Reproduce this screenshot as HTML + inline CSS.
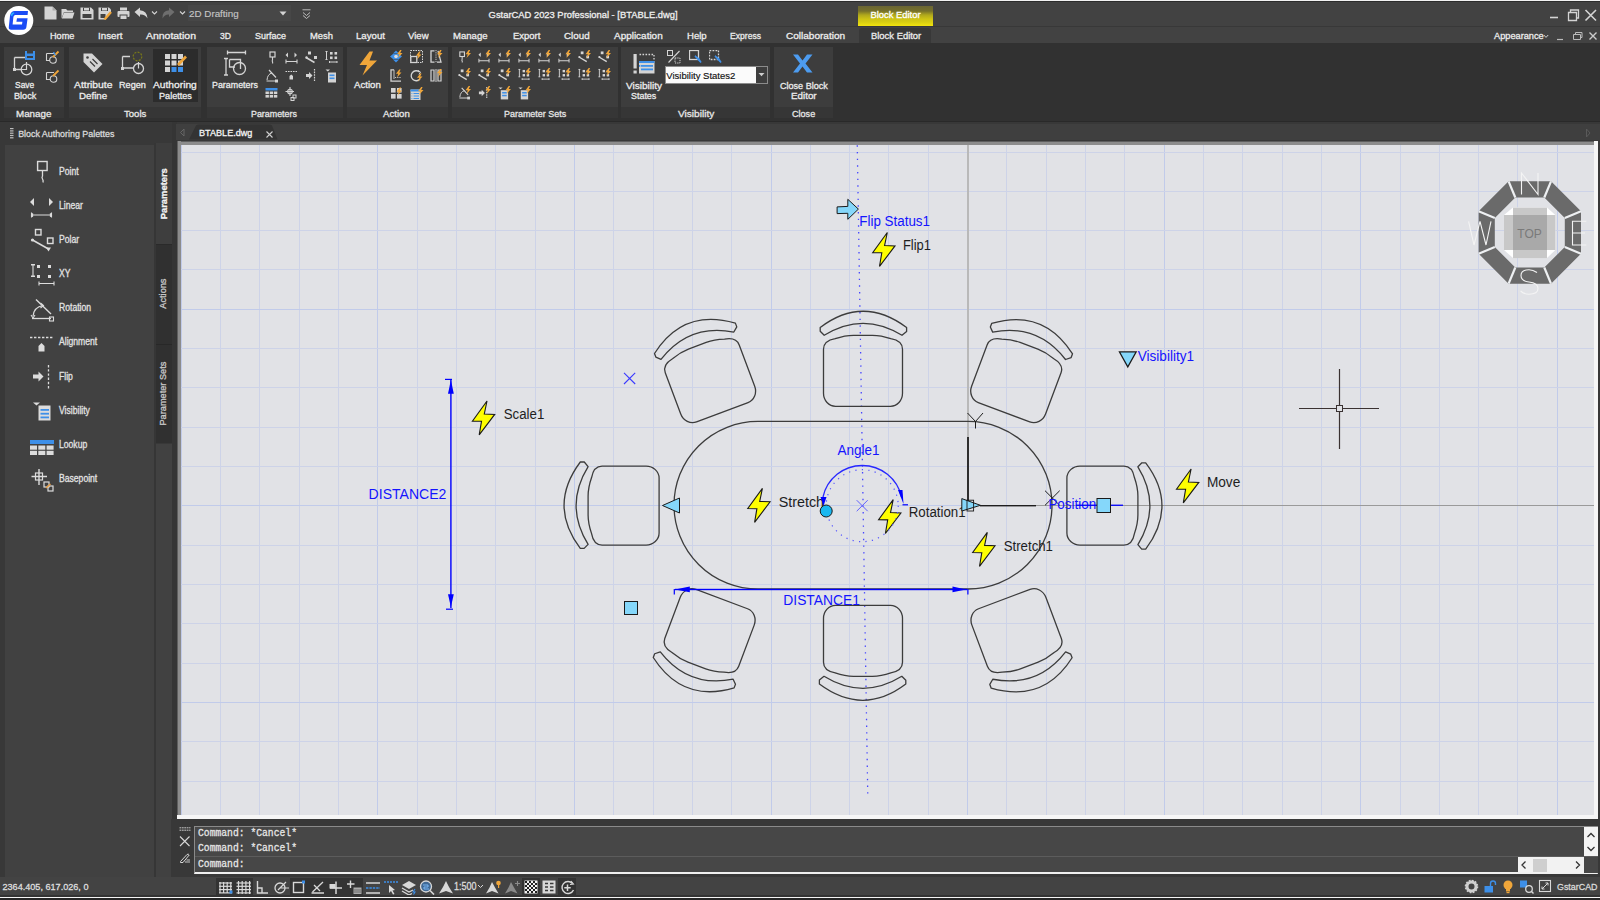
<!DOCTYPE html>
<html><head><meta charset="utf-8">
<style>
*{box-sizing:border-box;margin:0;padding:0}
html,body{width:1600px;height:900px;overflow:hidden;background:#313131;font-family:"Liberation Sans",sans-serif;color:#e8e8e8}
.a{position:absolute}
.t{position:absolute;white-space:nowrap;font-size:9.2px;line-height:1;color:#ececec;-webkit-text-stroke:0.3px currentColor}
svg{position:absolute;overflow:hidden}
</style></head><body>
<div class="a" style="left:0;top:0;width:1600px;height:26px;background:#424242"></div>
<div class="a" style="left:0;top:0;width:1600px;height:1px;background:#f2f2f2"></div>
<div class="a" style="left:0;top:1px;width:1600px;height:1px;background:#2c2c2c"></div>
<div class="a" style="left:0;top:26px;width:1600px;height:1px;background:#383838"></div>
<div class="a" style="left:0;top:27px;width:1600px;height:16px;background:#424242"></div>
<div class="a" style="left:0;top:43px;width:1600px;height:78px;background:#313131"></div>
<div class="a" style="left:0;top:121px;width:1600px;height:1px;background:#292929"></div>
<div class="a" style="left:0;top:122px;width:1600px;height:756px;background:#383838"></div>
<div class="a" style="left:176px;top:124px;width:1424px;height:16px;background:#3f3f3f"></div>
<div class="a" style="left:5px;top:144px;width:150px;height:733px;background:#414141"></div>
<div class="a" style="left:177px;top:141px;width:1421px;height:678px;background:#f6f6f6"></div>
<div class="a" style="left:177px;top:141px;width:1417px;height:4px;background:#8c8c8c;border-top:1px solid #5e5e5e"></div>
<div class="a" style="left:177px;top:141px;width:4px;height:674px;background:#8c8c8c;border-left:1px solid #5e5e5e"></div>
<div class="a" style="left:181px;top:145px;width:1413px;height:670px;background:#e1e2e6"></div>
<svg style="left:181px;top:145px" width="1413" height="670" viewBox="181 145 1413 670">
<g shape-rendering="crispEdges">
<rect x="181" y="145" width="1" height="670" fill="#c1cbea"/>
<rect x="220" y="145" width="1" height="670" fill="#cdd3e8"/>
<rect x="259" y="145" width="1" height="670" fill="#cdd3e8"/>
<rect x="299" y="145" width="1" height="670" fill="#cdd3e8"/>
<rect x="338" y="145" width="1" height="670" fill="#cdd3e8"/>
<rect x="377" y="145" width="1" height="670" fill="#c1cbea"/>
<rect x="417" y="145" width="1" height="670" fill="#cdd3e8"/>
<rect x="456" y="145" width="1" height="670" fill="#cdd3e8"/>
<rect x="495" y="145" width="1" height="670" fill="#cdd3e8"/>
<rect x="535" y="145" width="1" height="670" fill="#cdd3e8"/>
<rect x="574" y="145" width="1" height="670" fill="#c1cbea"/>
<rect x="613" y="145" width="1" height="670" fill="#cdd3e8"/>
<rect x="653" y="145" width="1" height="670" fill="#cdd3e8"/>
<rect x="692" y="145" width="1" height="670" fill="#cdd3e8"/>
<rect x="731" y="145" width="1" height="670" fill="#cdd3e8"/>
<rect x="771" y="145" width="1" height="670" fill="#c1cbea"/>
<rect x="810" y="145" width="1" height="670" fill="#cdd3e8"/>
<rect x="849" y="145" width="1" height="670" fill="#cdd3e8"/>
<rect x="888" y="145" width="1" height="670" fill="#cdd3e8"/>
<rect x="928" y="145" width="1" height="670" fill="#cdd3e8"/>
<rect x="967" y="145" width="1" height="670" fill="#c1cbea"/>
<rect x="1006" y="145" width="1" height="670" fill="#cdd3e8"/>
<rect x="1046" y="145" width="1" height="670" fill="#cdd3e8"/>
<rect x="1085" y="145" width="1" height="670" fill="#cdd3e8"/>
<rect x="1124" y="145" width="1" height="670" fill="#cdd3e8"/>
<rect x="1164" y="145" width="1" height="670" fill="#c1cbea"/>
<rect x="1203" y="145" width="1" height="670" fill="#cdd3e8"/>
<rect x="1242" y="145" width="1" height="670" fill="#cdd3e8"/>
<rect x="1282" y="145" width="1" height="670" fill="#cdd3e8"/>
<rect x="1321" y="145" width="1" height="670" fill="#cdd3e8"/>
<rect x="1360" y="145" width="1" height="670" fill="#c1cbea"/>
<rect x="1400" y="145" width="1" height="670" fill="#cdd3e8"/>
<rect x="1439" y="145" width="1" height="670" fill="#cdd3e8"/>
<rect x="1478" y="145" width="1" height="670" fill="#cdd3e8"/>
<rect x="1517" y="145" width="1" height="670" fill="#cdd3e8"/>
<rect x="1557" y="145" width="1" height="670" fill="#c1cbea"/>
<rect x="181" y="152" width="1413" height="1" fill="#cdd3e8"/>
<rect x="181" y="191" width="1413" height="1" fill="#cdd3e8"/>
<rect x="181" y="230" width="1413" height="1" fill="#cdd3e8"/>
<rect x="181" y="269" width="1413" height="1" fill="#cdd3e8"/>
<rect x="181" y="309" width="1413" height="1" fill="#c1cbea"/>
<rect x="181" y="348" width="1413" height="1" fill="#cdd3e8"/>
<rect x="181" y="387" width="1413" height="1" fill="#cdd3e8"/>
<rect x="181" y="427" width="1413" height="1" fill="#cdd3e8"/>
<rect x="181" y="466" width="1413" height="1" fill="#cdd3e8"/>
<rect x="181" y="505" width="1413" height="1" fill="#c1cbea"/>
<rect x="181" y="545" width="1413" height="1" fill="#cdd3e8"/>
<rect x="181" y="584" width="1413" height="1" fill="#cdd3e8"/>
<rect x="181" y="623" width="1413" height="1" fill="#cdd3e8"/>
<rect x="181" y="663" width="1413" height="1" fill="#cdd3e8"/>
<rect x="181" y="702" width="1413" height="1" fill="#c1cbea"/>
<rect x="181" y="741" width="1413" height="1" fill="#cdd3e8"/>
<rect x="181" y="781" width="1413" height="1" fill="#cdd3e8"/>
</g>
<rect x="967" y="145" width="2" height="292" fill="#b9b9b9" shape-rendering="crispEdges"/>
<rect x="1036" y="505" width="558" height="1" fill="#9a9a9a" shape-rendering="crispEdges"/>
<line x1="857.27" y1="145.3" x2="867.8" y2="797.5" stroke="#4646ff" stroke-width="1.3" stroke-dasharray="1.4 5.27"/>
<g fill="none" stroke="#3c3c3c" stroke-width="1.3" stroke-linejoin="round">
<g transform="translate(863,370.8) rotate(0)"><path d="M -27.5,35.5 L 27.5,35.5 A 12,13 0 0 0 39.5,22.5 L 39.5,-21.5 Q 39.5,-30 27.8,-32.1 Q 18,-35.5 9.5,-35.5 L -9.5,-35.5 Q -18,-35.5 -27.8,-32.1 Q -39.5,-30 -39.5,-21.5 L -39.5,22.5 A 12,13 0 0 0 -27.5,35.5 Z"/><path d="M -42.8,-43.3 Q 0,-75.8 43.6,-43.3 L 43.6,-39.3 L 39,-35.5 Q 0,-59.5 -38.8,-35.5 L -42.8,-39.5 Z"/></g>
<g transform="translate(709.8,379) rotate(-20.6)"><path d="M -27.5,35.5 L 27.5,35.5 A 12,13 0 0 0 39.5,22.5 L 39.5,-21.5 Q 39.5,-30 27.8,-32.1 Q 18,-35.5 9.5,-35.5 L -9.5,-35.5 Q -18,-35.5 -27.8,-32.1 Q -39.5,-30 -39.5,-21.5 L -39.5,22.5 A 12,13 0 0 0 -27.5,35.5 Z"/><path d="M -42.8,-43.3 Q 0,-75.8 43.6,-43.3 L 43.6,-39.3 L 39,-35.5 Q 0,-59.5 -38.8,-35.5 L -42.8,-39.5 Z"/></g>
<g transform="translate(1016.5,379) rotate(20.6)"><path d="M -27.5,35.5 L 27.5,35.5 A 12,13 0 0 0 39.5,22.5 L 39.5,-21.5 Q 39.5,-30 27.8,-32.1 Q 18,-35.5 9.5,-35.5 L -9.5,-35.5 Q -18,-35.5 -27.8,-32.1 Q -39.5,-30 -39.5,-21.5 L -39.5,22.5 A 12,13 0 0 0 -27.5,35.5 Z"/><path d="M -42.8,-43.3 Q 0,-75.8 43.6,-43.3 L 43.6,-39.3 L 39,-35.5 Q 0,-59.5 -38.8,-35.5 L -42.8,-39.5 Z"/></g>
<g transform="translate(863,640.8) rotate(180)"><path d="M -27.5,35.5 L 27.5,35.5 A 12,13 0 0 0 39.5,22.5 L 39.5,-21.5 Q 39.5,-30 27.8,-32.1 Q 18,-35.5 9.5,-35.5 L -9.5,-35.5 Q -18,-35.5 -27.8,-32.1 Q -39.5,-30 -39.5,-21.5 L -39.5,22.5 A 12,13 0 0 0 -27.5,35.5 Z"/><path d="M -42.8,-43.3 Q 0,-75.8 43.6,-43.3 L 43.6,-39.3 L 39,-35.5 Q 0,-59.5 -38.8,-35.5 L -42.8,-39.5 Z"/></g>
<g transform="translate(709.3,632.3) rotate(-159.4)"><path d="M -27.5,35.5 L 27.5,35.5 A 12,13 0 0 0 39.5,22.5 L 39.5,-21.5 Q 39.5,-30 27.8,-32.1 Q 18,-35.5 9.5,-35.5 L -9.5,-35.5 Q -18,-35.5 -27.8,-32.1 Q -39.5,-30 -39.5,-21.5 L -39.5,22.5 A 12,13 0 0 0 -27.5,35.5 Z"/><path d="M -42.8,-43.3 Q 0,-75.8 43.6,-43.3 L 43.6,-39.3 L 39,-35.5 Q 0,-59.5 -38.8,-35.5 L -42.8,-39.5 Z"/></g>
<g transform="translate(1016.8,632.3) rotate(159.4)"><path d="M -27.5,35.5 L 27.5,35.5 A 12,13 0 0 0 39.5,22.5 L 39.5,-21.5 Q 39.5,-30 27.8,-32.1 Q 18,-35.5 9.5,-35.5 L -9.5,-35.5 Q -18,-35.5 -27.8,-32.1 Q -39.5,-30 -39.5,-21.5 L -39.5,22.5 A 12,13 0 0 0 -27.5,35.5 Z"/><path d="M -42.8,-43.3 Q 0,-75.8 43.6,-43.3 L 43.6,-39.3 L 39,-35.5 Q 0,-59.5 -38.8,-35.5 L -42.8,-39.5 Z"/></g>
<g transform="translate(623.6,505.6) rotate(-90)"><path d="M -27.5,35.5 L 27.5,35.5 A 12,13 0 0 0 39.5,22.5 L 39.5,-21.5 Q 39.5,-30 27.8,-32.1 Q 18,-35.5 9.5,-35.5 L -9.5,-35.5 Q -18,-35.5 -27.8,-32.1 Q -39.5,-30 -39.5,-21.5 L -39.5,22.5 A 12,13 0 0 0 -27.5,35.5 Z"/><path d="M -42.8,-43.3 Q 0,-75.8 43.6,-43.3 L 43.6,-39.3 L 39,-35.5 Q 0,-59.5 -38.8,-35.5 L -42.8,-39.5 Z"/></g>
<g transform="translate(1102.4,505.6) rotate(90)"><path d="M -27.5,35.5 L 27.5,35.5 A 12,13 0 0 0 39.5,22.5 L 39.5,-21.5 Q 39.5,-30 27.8,-32.1 Q 18,-35.5 9.5,-35.5 L -9.5,-35.5 Q -18,-35.5 -27.8,-32.1 Q -39.5,-30 -39.5,-21.5 L -39.5,22.5 A 12,13 0 0 0 -27.5,35.5 Z"/><path d="M -42.8,-43.3 Q 0,-75.8 43.6,-43.3 L 43.6,-39.3 L 39,-35.5 Q 0,-59.5 -38.8,-35.5 L -42.8,-39.5 Z"/></g>
<path d="M 758,421.4 L 968,421.4 A 84,83.8 0 0 1 968,589 L 758,589 A 84,83.8 0 0 1 758,421.4 Z"/>
</g>
<path d="M967.5,413 L975.5,421.5 L983,413 M975.5,421.5 V428.5" fill="none" stroke="#1e1e1e" stroke-width="1"/>
<rect x="967" y="437" width="2" height="66" fill="#2e2e2e" shape-rendering="crispEdges"/>
<rect x="980" y="505" width="56" height="1.4" fill="#1e1e1e"/>
<path d="M1045,490.7 L1059.7,505.3 M1059.7,490.7 L1045,505.3" stroke="#1e1e1e" stroke-width="1" fill="none"/>
<polygon points="887.3,232.5 884.6,245.5 895.0,245.9 879.5,266.4 881.8,252.8 872.7,252.6" fill="#ffff00" stroke="#1a1a1a" stroke-width="1.1" stroke-linejoin="miter"/>
<polygon points="487.0,401.0 484.3,414.0 494.7,414.4 479.2,434.9 481.5,421.3 472.4,421.1" fill="#ffff00" stroke="#1a1a1a" stroke-width="1.1" stroke-linejoin="miter"/>
<polygon points="762.4,488.4 759.7,501.4 770.1,501.8 754.6,522.3 756.9,508.7 747.8,508.5" fill="#ffff00" stroke="#1a1a1a" stroke-width="1.1" stroke-linejoin="miter"/>
<polygon points="893.2,499.6 890.5,512.6 900.9,513.0 885.4,533.5 887.7,519.9 878.6,519.7" fill="#ffff00" stroke="#1a1a1a" stroke-width="1.1" stroke-linejoin="miter"/>
<polygon points="987.3,532.4 984.6,545.4 995.0,545.8 979.5,566.3 981.8,552.7 972.7,552.5" fill="#ffff00" stroke="#1a1a1a" stroke-width="1.1" stroke-linejoin="miter"/>
<polygon points="1191.1,469.0 1188.4,482.0 1198.8,482.4 1183.3,502.9 1185.6,489.3 1176.5,489.1" fill="#ffff00" stroke="#1a1a1a" stroke-width="1.1" stroke-linejoin="miter"/>
<g font-family="Liberation Sans, sans-serif">
<text x="859.3" y="226.4" fill="#1414ff" font-size="14" textLength="70.7" lengthAdjust="spacingAndGlyphs">Flip Status1</text>
<text x="902.9" y="250" fill="#1e1e1e" font-size="14" textLength="28" lengthAdjust="spacingAndGlyphs">Flip1</text>
<text x="503.7" y="418.7" fill="#1e1e1e" font-size="14" textLength="40.6" lengthAdjust="spacingAndGlyphs">Scale1</text>
<text x="368.6" y="499.4" fill="#1414ff" font-size="14" textLength="77.8" lengthAdjust="spacingAndGlyphs">DISTANCE2</text>
<text x="837.5" y="454.7" fill="#1414ff" font-size="14" textLength="42" lengthAdjust="spacingAndGlyphs">Angle1</text>
<text x="778.7" y="506.5" fill="#1e1e1e" font-size="14" textLength="45.3" lengthAdjust="spacingAndGlyphs">Stretch</text>
<text x="908.7" y="517.3" fill="#1e1e1e" font-size="14" textLength="57" lengthAdjust="spacingAndGlyphs">Rotation1</text>
<text x="1048.4" y="508.7" fill="#1414ff" font-size="14" textLength="47.8" lengthAdjust="spacingAndGlyphs">Position</text>
<text x="1003.7" y="550.6" fill="#1e1e1e" font-size="14" textLength="49.3" lengthAdjust="spacingAndGlyphs">Stretch1</text>
<text x="1206.9" y="486.6" fill="#1e1e1e" font-size="14" textLength="33.4" lengthAdjust="spacingAndGlyphs">Move</text>
<text x="1137.8" y="360.6" fill="#1414ff" font-size="14" textLength="56.2" lengthAdjust="spacingAndGlyphs">Visibility1</text>
<text x="783.3" y="604.9" fill="#1414ff" font-size="14" textLength="76.6" lengthAdjust="spacingAndGlyphs">DISTANCE1</text>
</g>
<polygon points="837.1,206.9 847.8,206.4 847.8,199.3 858.4,209.1 847.8,219.3 847.8,213.3 837.1,213.6" fill="#85d7fa" stroke="#1a1a1a" stroke-width="1"/>
<path d="M624,372.8 L635.2,384 M635.2,372.8 L624,384" stroke="#3a3aff" stroke-width="1.1"/>
<path d="M856.7,500.2 L867.7,511.2 M867.7,500.2 L856.7,511.2" stroke="#6060ff" stroke-width="1"/>
<g fill="#0000ff" stroke="none">
<rect x="450.2" y="380" width="1.4" height="228"/>
<polygon points="450.9,380 453.8,393.8 448,393.8"/>
<polygon points="450.9,607 453.8,594.2 448,594.2"/>
<rect x="445" y="378.8" width="7" height="1.2"/><rect x="446" y="608.6" width="7" height="1.2"/>
<rect x="675" y="588.8" width="292" height="1.4"/>
<polygon points="675,589.5 689.8,586.6 689.8,592.3"/>
<polygon points="966,589.5 952.5,586.6 952.5,592.3"/>
<rect x="673.7" y="589" width="1.2" height="5.5"/><rect x="967.3" y="589" width="1.2" height="5.5"/>
<rect x="1076" y="504.6" width="47" height="1.3"/>
</g>
<path d="M823,497 A40.2,40.2 0 0 1 901.5,497" fill="none" stroke="#2828ff" stroke-width="1.3"/>
<polygon points="820.5,497 826.5,497 823.5,506" fill="#0000ff"/>
<polygon points="898,490 902.5,490 903.5,504" fill="#0000ff"/>
<path d="M902.5,504.8 H908" stroke="#0000ff" stroke-width="1.2"/>
<circle cx="862.2" cy="505.7" r="36" fill="none" stroke="#5555ff" stroke-width="1.2" stroke-dasharray="1.2 5.3"/>
<circle cx="826.2" cy="511" r="6" fill="#1ab8f0" stroke="#1a1a1a" stroke-width="1"/>
<rect x="624.5" y="601.5" width="13" height="13" fill="#85d7fa" stroke="#1a1a1a" stroke-width="1"/>
<rect x="1097" y="498.5" width="13.5" height="14" fill="#85d7fa" stroke="#1a1a1a" stroke-width="1"/>
<polygon points="662.5,505.5 679.5,498 679.5,513" fill="#85d7fa" stroke="#1a1a1a" stroke-width="1"/>
<polygon points="1119.4,351.9 1136.2,351.9 1127.8,366.9" fill="#85d7fa" stroke="#1a1a1a" stroke-width="1.2"/>
<polygon points="961.8,498.6 980.4,505.3 961.8,511" fill="#85d7fa" stroke="#1a1a1a" stroke-width="1"/>
<rect x="967" y="500.2" width="6.6" height="10.8" fill="none" stroke="#1a1a1a" stroke-width="0.9"/>
<g stroke="#3a3232" stroke-width="1.2"><path d="M1299,408.5 H1336 M1343,408.5 H1379 M1339.5,369 V405 M1339.5,412 V449"/><rect x="1336.5" y="405.5" width="6" height="6" fill="none" stroke-width="1"/></g>
<path d="M1581.0,253.7 L1551.0,283.7 L1508.6,283.7 L1478.6,253.7 L1478.6,211.3 L1508.6,181.3 L1551.0,181.3 L1581.0,211.3Z M1564.8,218.0 L1544.3,197.5 L1515.3,197.5 L1494.8,218.0 L1494.8,247.0 L1515.3,267.5 L1544.3,267.5 L1564.8,247.0Z" fill="#6a6a6a" fill-rule="evenodd"/>
<g stroke="#eef0f2" stroke-width="2.2"><line x1="1564.8" y1="247.0" x2="1581.0" y2="253.7"/><line x1="1544.3" y1="267.5" x2="1551.0" y2="283.7"/><line x1="1515.3" y1="267.5" x2="1508.6" y2="283.7"/><line x1="1494.8" y1="247.0" x2="1478.6" y2="253.7"/><line x1="1494.8" y1="218.0" x2="1478.6" y2="211.3"/><line x1="1515.3" y1="197.5" x2="1508.6" y2="181.3"/><line x1="1544.3" y1="197.5" x2="1551.0" y2="181.3"/><line x1="1564.8" y1="218.0" x2="1581.0" y2="211.3"/></g>
<polygon points="1504,215 1513,207.6 1547,207.6 1555.3,215 1555.3,250 1547,258 1513,258 1504,250" fill="#ffffff"/>
<rect x="1504" y="215" width="51.3" height="35" fill="#c8c8c8"/><rect x="1513" y="207.6" width="34" height="50.5" fill="#c8c8c8"/>
<rect x="1513" y="215" width="34" height="35" fill="#a9a9a9"/>
<text x="1529.5" y="238" font-family="Liberation Sans, sans-serif" font-size="12" fill="#7a7a7a" text-anchor="middle">TOP</text>
<g fill="none" stroke="#f4f4f4" stroke-width="1.1">
<path d="M1521.5,194.5 V173 L1538,194.5 V173"/>
<path d="M1468.6,221.3 L1474,245 L1480,221.3 L1486,245 L1491,221.3"/>
<path d="M1586.3,221.3 H1572.5 V245 H1586.3 M1572.5,233 H1585"/>
<path d="M1537,272.5 Q1533,269.7 1529,269.7 Q1521,269.7 1521,275.5 Q1521,281 1529,282 Q1538,283 1538,288.5 Q1538,294.2 1529,294.2 Q1524,294.2 1520.6,291"/>
</g>
</svg>
<svg style="left:2px;top:3px" width="36" height="36" viewBox="0 0 36 36"><circle cx="16.8" cy="17.4" r="14.5" fill="#ffffff"/><path d="M12.8,8 L26,8 L25.6,12 L13.2,12 Q11.6,12.4 11.4,14 L10.6,21.6 L20,21.6 L20.4,18.8 L14.4,18.8 L15,15.2 L25.6,15.2 L24.4,24 Q24,26.8 21.2,26.8 L9.2,26.8 Q6.4,26.8 6.8,24 L8,12.8 Q8.8,8 12.8,8Z" fill="#1a4cf5"/><path d="M8.6,12 Q9.5,9.5 11.5,9.2 L12.5,10 Q10.5,11 10,13.5Z" fill="#27b4ff"/></svg>
<svg style="left:44px;top:6px" width="13" height="14" viewBox="0 0 13 14"><path d="M0.5,0.5 H8.5 L12.5,4.5 V13.5 H0.5Z" fill="#d4d4d4"/><path d="M8.5,0.5 V4.5 H12.5" fill="#aaa"/></svg>
<svg style="left:61px;top:8px" width="14" height="11" viewBox="0 0 14 11"><path d="M0.5,1 H5 L6.5,2.5 H12 V4 H3 L0.5,10.5Z" fill="#d4d4d4"/><path d="M3,4.5 H13.5 L11.5,10.5 H0.8Z" fill="#d4d4d4"/></svg>
<svg style="left:80px;top:7px" width="14" height="13" viewBox="0 0 14 13"><path d="M0.5,0.5 H11 L13.5,3 V12.5 H0.5Z" fill="#d4d4d4"/><rect x="3" y="0.5" width="7" height="3.5" fill="#424242"/><rect x="4" y="1" width="5" height="2.5" fill="#d4d4d4"/><rect x="2.5" y="7" width="9" height="4" fill="#424242"/></svg>
<svg style="left:98px;top:7px" width="14" height="13" viewBox="0 0 14 13"><path d="M0.5,0.5 H11 L13,2.5 V6 L7,12.5 H0.5Z" fill="#d4d4d4"/><rect x="3" y="0.5" width="7" height="3.5" fill="#424242"/><rect x="4" y="1" width="5" height="2.5" fill="#d4d4d4"/><rect x="2.5" y="7" width="5" height="4" fill="#424242"/><path d="M6.5,12.5 L13,5" stroke="#f0a63a" stroke-width="2.4"/></svg>
<svg style="left:117px;top:7px" width="13" height="13" viewBox="0 0 13 13"><rect x="3" y="0.5" width="7" height="3" fill="#d4d4d4"/><rect x="0.5" y="4" width="12" height="6" rx="1" fill="#d4d4d4"/><rect x="3" y="8" width="7" height="4.5" fill="#d4d4d4" stroke="#424242" stroke-width="1"/></svg>
<svg style="left:134px;top:7px" width="14" height="12" viewBox="0 0 14 12"><path d="M0.5,5 L6,0.5 V3.2 Q13,3.5 13.5,11.5 Q11,7 6,7.5 V10Z" fill="#d4d4d4"/></svg>
<svg style="left:151px;top:10px" width="7" height="6" viewBox="0 0 7 6"><path d="M1,1.5 L3.5,4 L6,1.5" fill="none" stroke="#d4d4d4" stroke-width="1.1"/></svg>
<svg style="left:162px;top:7px" width="13" height="12" viewBox="0 0 13 12"><path d="M12.5,5 L7,0.5 V3.2 Q0,3.5 0.5,11.5 Q3,7 7,7.5 V10Z" fill="#6e6e6e"/></svg>
<svg style="left:178.5px;top:10px" width="7" height="6" viewBox="0 0 7 6"><path d="M1,1.5 L3.5,4 L6,1.5" fill="none" stroke="#d4d4d4" stroke-width="1.1"/></svg>
<div class="a" style="left:187.7px;top:5px;width:103.3px;height:16.4px;background:#474747;"></div>
<div class="t" style="left:188.60px;top:8.92px;font-size:9.9px;color:#c4c4c4;transform:scaleX(0.995);transform-origin:0 0;-webkit-text-stroke:0.15px #c4c4c4">2D Drafting</div>
<svg style="left:279px;top:11px" width="8" height="5" viewBox="0 0 8 5"><path d="M0.5,0.5 H7.5 L4,4.5Z" fill="#d4d4d4"/></svg>
<svg style="left:302px;top:9px" width="9" height="10" viewBox="0 0 9 10"><path d="M0.5,0.8 H8.5 M1,3.5 L4.5,6.5 L8,3.5 M1,6.5 L4.5,9.5 L8,6.5" fill="none" stroke="#bdbdbd" stroke-width="1"/></svg>
<div class="t" style="left:488.6px;top:9.94px;font-size:9.4px;color:#eeeeee;font-weight:normal;">GstarCAD 2023 Professional - [BTABLE.dwg]</div>
<div class="a" style="left:857.5px;top:5.5px;width:75.75px;height:20.3px;background:linear-gradient(#6a6534 0%,#76702a 25%,#b0a81c 45%,#cdc314 65%,#d8ce12 80%,#f2e40e 100%);"></div>
<div class="t" style="left:870.5px;top:10.04px;font-size:9.4px;color:#ffffff;font-weight:normal;">Block Editor</div>
<svg style="left:1548px;top:8px" width="50" height="14" viewBox="0 0 50 14"><path d="M2,9.5 H10" stroke="#d4d4d4" stroke-width="1.6"/><path d="M20.5,4.5 H28.5 V12.5 H20.5Z M22.5,4.5 V2 H30.5 V10 H28.5" fill="none" stroke="#d4d4d4" stroke-width="1.3"/><path d="M37.5,2 L48,12.5 M48,2 L37.5,12.5" stroke="#d4d4d4" stroke-width="1.6"/></svg>
<div class="t" style="left:50.30px;top:31.17px;font-size:9.6px;color:#ececec;transform:scaleX(0.953);transform-origin:0 0;">Home</div>
<div class="t" style="left:98.00px;top:31.17px;font-size:9.6px;color:#ececec;transform:scaleX(1.020);transform-origin:0 0;">Insert</div>
<div class="t" style="left:146.00px;top:31.17px;font-size:9.6px;color:#ececec;transform:scaleX(1.089);transform-origin:0 0;">Annotation</div>
<div class="t" style="left:220.00px;top:31.17px;font-size:9.6px;color:#ececec;transform:scaleX(0.897);transform-origin:0 0;">3D</div>
<div class="t" style="left:255.00px;top:31.17px;font-size:9.6px;color:#ececec;transform:scaleX(0.937);transform-origin:0 0;">Surface</div>
<div class="t" style="left:310.00px;top:31.17px;font-size:9.6px;color:#ececec;transform:scaleX(0.980);transform-origin:0 0;">Mesh</div>
<div class="t" style="left:356.00px;top:31.17px;font-size:9.6px;color:#ececec;transform:scaleX(1.006);transform-origin:0 0;">Layout</div>
<div class="t" style="left:408.40px;top:31.17px;font-size:9.6px;color:#ececec;transform:scaleX(0.997);transform-origin:0 0;">View</div>
<div class="t" style="left:453.40px;top:31.17px;font-size:9.6px;color:#ececec;transform:scaleX(0.997);transform-origin:0 0;">Manage</div>
<div class="t" style="left:512.50px;top:31.17px;font-size:9.6px;color:#ececec;transform:scaleX(0.984);transform-origin:0 0;">Export</div>
<div class="t" style="left:563.70px;top:31.17px;font-size:9.6px;color:#ececec;transform:scaleX(1.021);transform-origin:0 0;">Cloud</div>
<div class="t" style="left:613.70px;top:31.17px;font-size:9.6px;color:#ececec;transform:scaleX(1.037);transform-origin:0 0;">Application</div>
<div class="t" style="left:686.80px;top:31.17px;font-size:9.6px;color:#ececec;transform:scaleX(0.998);transform-origin:0 0;">Help</div>
<div class="t" style="left:730.40px;top:31.17px;font-size:9.6px;color:#ececec;transform:scaleX(0.894);transform-origin:0 0;">Express</div>
<div class="t" style="left:785.80px;top:31.17px;font-size:9.6px;color:#ececec;transform:scaleX(1.045);transform-origin:0 0;">Collaboration</div>
<div class="a" style="left:858.75px;top:28.3px;width:72.5px;height:15px;background:#383838;border-radius:3px 3px 0 0"></div>
<div class="t" style="left:870.50px;top:31.17px;font-size:9.6px;color:#ececec;transform:scaleX(0.981);transform-origin:0 0;">Block Editor</div>
<div class="t" style="left:1493.75px;top:31.17px;font-size:9.6px;color:#ececec;transform:scaleX(0.961);transform-origin:0 0;">Appearance</div>
<svg style="left:1543px;top:34px" width="6" height="5" viewBox="0 0 6 5"><path d="M0.8,1 L3,3.4 L5.2,1" fill="none" stroke="#d4d4d4" stroke-width="1"/></svg>
<svg style="left:1555px;top:31px" width="44" height="10" viewBox="0 0 44 10"><path d="M2,8.5 H8" stroke="#bbbbbb" stroke-width="1.2"/><path d="M18.5,3.5 H25.5 V8.5 H18.5Z M20.5,3.5 V1.5 H27 V6.5 H25.5" fill="none" stroke="#bbbbbb" stroke-width="1"/><path d="M34.5,1.5 L41.5,8.5 M41.5,1.5 L34.5,8.5" stroke="#cccccc" stroke-width="1.4"/></svg>
<div class="a" style="left:4px;top:47px;width:60.3px;height:60px;background:#3d3d3d;"></div>
<div class="a" style="left:4px;top:107px;width:60.3px;height:11px;background:#363636;"></div>
<div class="t" style="left:16.25px;top:108.67px;font-size:9.6px;color:#e6e6e6;transform:scaleX(1.022);transform-origin:0 0;">Manage</div>
<div class="a" style="left:68.9px;top:47px;width:132.5px;height:60px;background:#3d3d3d;"></div>
<div class="a" style="left:68.9px;top:107px;width:132.5px;height:11px;background:#363636;"></div>
<div class="t" style="left:124.00px;top:108.67px;font-size:9.6px;color:#e6e6e6;transform:scaleX(0.995);transform-origin:0 0;">Tools</div>
<div class="a" style="left:207.3px;top:47px;width:135.5px;height:60px;background:#3d3d3d;"></div>
<div class="a" style="left:207.3px;top:107px;width:135.5px;height:11px;background:#363636;"></div>
<div class="t" style="left:251.00px;top:108.67px;font-size:9.6px;color:#e6e6e6;transform:scaleX(0.925);transform-origin:0 0;">Parameters</div>
<div class="a" style="left:347.4px;top:47px;width:100.30000000000001px;height:60px;background:#3d3d3d;"></div>
<div class="a" style="left:347.4px;top:107px;width:100.30000000000001px;height:11px;background:#363636;"></div>
<div class="t" style="left:383.40px;top:108.67px;font-size:9.6px;color:#e6e6e6;transform:scaleX(1.005);transform-origin:0 0;">Action</div>
<div class="a" style="left:452.3px;top:47px;width:165.3px;height:60px;background:#3d3d3d;"></div>
<div class="a" style="left:452.3px;top:107px;width:165.3px;height:11px;background:#363636;"></div>
<div class="t" style="left:503.50px;top:108.67px;font-size:9.6px;color:#e6e6e6;transform:scaleX(0.933);transform-origin:0 0;">Parameter Sets</div>
<div class="a" style="left:621.3px;top:47px;width:148.4000000000001px;height:60px;background:#3d3d3d;"></div>
<div class="a" style="left:621.3px;top:107px;width:148.4000000000001px;height:11px;background:#363636;"></div>
<div class="t" style="left:677.60px;top:108.67px;font-size:9.6px;color:#e6e6e6;transform:scaleX(1.052);transform-origin:0 0;">Visibility</div>
<div class="a" style="left:774px;top:47px;width:59px;height:60px;background:#3d3d3d;"></div>
<div class="a" style="left:774px;top:107px;width:59px;height:11px;background:#363636;"></div>
<div class="t" style="left:791.50px;top:108.67px;font-size:9.6px;color:#e6e6e6;transform:scaleX(0.945);transform-origin:0 0;">Close</div>
<div class="a" style="left:152.9px;top:49.2px;width:45.3px;height:53.2px;background:#2c2c2c;"></div>
<div class="t" style="left:15.10px;top:80.47px;font-size:9.6px;color:#ececec;transform:scaleX(0.882);transform-origin:0 0;">Save</div>
<div class="t" style="left:13.80px;top:90.97px;font-size:9.6px;color:#ececec;transform:scaleX(0.949);transform-origin:0 0;">Block</div>
<div class="t" style="left:74.10px;top:80.47px;font-size:9.6px;color:#ececec;transform:scaleX(1.077);transform-origin:0 0;">Attribute</div>
<div class="t" style="left:79.40px;top:90.97px;font-size:9.6px;color:#ececec;transform:scaleX(1.016);transform-origin:0 0;">Define</div>
<div class="t" style="left:119.40px;top:80.47px;font-size:9.6px;color:#ececec;transform:scaleX(0.951);transform-origin:0 0;">Regen</div>
<div class="t" style="left:153.30px;top:80.47px;font-size:9.6px;color:#ececec;transform:scaleX(1.066);transform-origin:0 0;">Authoring</div>
<div class="t" style="left:159.40px;top:90.97px;font-size:9.6px;color:#ececec;transform:scaleX(0.949);transform-origin:0 0;">Palettes</div>
<div class="t" style="left:211.90px;top:80.27px;font-size:9.6px;color:#ececec;transform:scaleX(0.925);transform-origin:0 0;">Parameters</div>
<div class="t" style="left:354.30px;top:80.27px;font-size:9.6px;color:#ececec;transform:scaleX(1.005);transform-origin:0 0;">Action</div>
<div class="t" style="left:626.00px;top:80.57px;font-size:9.6px;color:#ececec;transform:scaleX(1.046);transform-origin:0 0;">Visibility</div>
<div class="t" style="left:631.20px;top:90.77px;font-size:9.6px;color:#ececec;transform:scaleX(0.930);transform-origin:0 0;">States</div>
<div class="t" style="left:779.60px;top:80.57px;font-size:9.6px;color:#ececec;transform:scaleX(0.943);transform-origin:0 0;">Close Block</div>
<div class="t" style="left:791.20px;top:90.77px;font-size:9.6px;color:#ececec;transform:scaleX(1.021);transform-origin:0 0;">Editor</div>
<svg style="left:12px;top:50px" width="24" height="26" viewBox="0 0 24 26"><path d="M2.5,7.5 H14 M2.5,7.5 V19.5 H9" fill="none" stroke="#d4d4d4" stroke-width="1.3"/><rect x="1" y="18" width="3" height="3" fill="#d4d4d4"/><circle cx="14.5" cy="19.5" r="5.3" fill="none" stroke="#d4d4d4" stroke-width="1.3"/><path d="M14.5,12 V19.5 H8" stroke="#d4d4d4" stroke-width="1.2" fill="none"/><path d="M13,1 H23 V10 H13Z" fill="#3d8fe8"/><rect x="15" y="1" width="6" height="2.5" fill="#3d3d3d"/><rect x="15" y="6" width="6" height="2" fill="#3d3d3d"/></svg>
<svg style="left:45px;top:50px" width="15" height="14" viewBox="0 0 15 14"><path d="M1.5,3.5 H9 M1.5,3.5 V10.5 H5" fill="none" stroke="#d4d4d4" stroke-width="1.1"/><circle cx="8" cy="10" r="3.3" fill="none" stroke="#d4d4d4" stroke-width="1.1"/><path d="M8,7 L13.5,1.5" stroke="#f0a63a" stroke-width="1.8"/><path d="M8.5,2 L10.5,5.5" stroke="#3d8fe8" stroke-width="1.4"/></svg>
<svg style="left:45px;top:69px" width="15" height="14" viewBox="0 0 15 14"><path d="M1.5,3.5 H9 M1.5,3.5 V10.5 H5" fill="none" stroke="#d4d4d4" stroke-width="1.1"/><circle cx="8.5" cy="10" r="3.3" fill="none" stroke="#d4d4d4" stroke-width="1.1"/><path d="M8,7 L13.5,1.5" stroke="#f0a63a" stroke-width="1.8"/></svg>
<svg style="left:82px;top:52px" width="22" height="22" viewBox="0 0 22 22"><path d="M1.5,1.5 H10 L20.5,12 L12,20.5 L1.5,10Z" fill="#d4d4d4"/><circle cx="5.5" cy="5.5" r="1.3" fill="#3d3d3d"/><path d="M8,9.5 L13,14.5 M10.5,7 L15.5,12" stroke="#3d3d3d" stroke-width="1.2"/></svg>
<svg style="left:120px;top:51px" width="26" height="25" viewBox="0 0 26 25"><path d="M2.5,5.5 H10 M2.5,5.5 V17 H13" fill="none" stroke="#d4d4d4" stroke-width="1.3"/><rect x="1" y="16" width="3" height="3" fill="#d4d4d4"/><circle cx="18.5" cy="17.5" r="5" fill="none" stroke="#d4d4d4" stroke-width="1.3"/><path d="M18.5,11 V17.5" stroke="#d4d4d4" stroke-width="1.2"/><circle cx="17.5" cy="5.5" r="4.3" fill="none" stroke="#7a7a18" stroke-width="1.2" stroke-dasharray="2 1.3"/></svg>
<svg style="left:164px;top:53px" width="24" height="22" viewBox="0 0 24 22"><rect x="1.0" y="1.0" width="5" height="5" fill="#d4d4d4"/><rect x="1.0" y="7.5" width="5" height="5" fill="#d4d4d4"/><rect x="1.0" y="14.0" width="5" height="5" fill="#d4d4d4"/><rect x="7.5" y="1.0" width="5" height="5" fill="#d4d4d4"/><rect x="7.5" y="7.5" width="5" height="5" fill="#d4d4d4"/><rect x="7.5" y="14.0" width="5" height="5" fill="#3d8fe8"/><rect x="14.0" y="1.0" width="5" height="5" fill="#d4d4d4"/><rect x="14.0" y="7.5" width="5" height="5" fill="#d4d4d4"/><rect x="14.0" y="14.0" width="5" height="5" fill="#3d8fe8"/><path d="M14,12 L22,3.5" stroke="#f0a63a" stroke-width="2.6"/></svg>
<svg style="left:222px;top:50px" width="26" height="27" viewBox="0 0 26 27"><path d="M5.5,2.5 H23.5 M5.5,0.5 V4.5 M23.5,0.5 V4.5 M2,8.5 H6 M2,25 H6 M4,8.5 V25" fill="none" stroke="#d4d4d4" stroke-width="1.3"/><path d="M7.5,9.5 H18.5 V19 M7.5,9.5 V17 H13" fill="none" stroke="#d4d4d4" stroke-width="1.3"/><circle cx="17.5" cy="18.5" r="6" fill="none" stroke="#d4d4d4" stroke-width="1.3"/></svg>
<svg style="left:358px;top:51px" width="19" height="25" viewBox="0 0 19 25"><path d="M11,0.5 L1,14 H8.5 L4,24.5 L18.5,9.5 H11 L14.5,0.5Z" fill="#f0a63a" transform="translate(0.5,0)"/></svg>
<svg style="left:633px;top:52px" width="22" height="22" viewBox="0 0 22 22"><rect x="0.5" y="2" width="3.2" height="14.5" fill="#d4d4d4"/><rect x="0.5" y="18.5" width="3.2" height="3" fill="#d4d4d4"/><path d="M6.5,2.5 H21 V8" fill="none" stroke="#d4d4d4" stroke-width="1.3" stroke-dasharray="1.6 1.4"/><rect x="6" y="9" width="15.5" height="12.5" fill="#d4d4d4"/><rect x="6" y="9" width="15.5" height="2" fill="#3d8fe8"/><rect x="8" y="13" width="12" height="1.8" fill="#3d8fe8"/><rect x="8" y="16.5" width="12" height="1.8" fill="#3d8fe8"/><rect x="6" y="13" width="1.3" height="1.8" fill="#3d8fe8"/></svg>
<svg style="left:792px;top:54px" width="22" height="19" viewBox="0 0 22 19"><path d="M1,0.5 H6 L10.5,6.5 L15,0.5 H20.5 L13.5,9.5 L20.5,18.5 H15 L10.5,12.5 L6,18.5 H1 L8,9.5Z" fill="#4d9cf0"/></svg>
<svg style="left:667px;top:50px" width="14" height="14" viewBox="0 0 14 14"><rect x="0.5" y="0.5" width="5" height="5" fill="none" stroke="#d4d4d4" stroke-width="1"/><rect x="8" y="8" width="5" height="5" fill="none" stroke="#d4d4d4" stroke-width="1" stroke-dasharray="1.3 1"/><path d="M12.5,1 L1.5,12.5" stroke="#d4d4d4" stroke-width="1.1"/></svg>
<svg style="left:689px;top:50px" width="13" height="14" viewBox="0 0 13 14"><rect x="0.5" y="0.5" width="9" height="9" fill="none" stroke="#d4d4d4" stroke-width="1.3"/><path d="M6,6 L12,12.5 L9.5,8.5Z" fill="#3d8fe8" stroke="#3d8fe8" stroke-width="1.5"/></svg>
<svg style="left:709px;top:50px" width="13" height="14" viewBox="0 0 13 14"><rect x="0.5" y="0.5" width="9" height="9" fill="none" stroke="#d4d4d4" stroke-width="1.3" stroke-dasharray="1.8 1.2"/><path d="M6,6 L12,12.5 L9.5,8.5Z" fill="#3d8fe8" stroke="#3d8fe8" stroke-width="1.5"/></svg>
<div class="a" style="left:665px;top:65.8px;width:102.6px;height:18.3px;background:#fbfbfb;border:1px solid #8c8c8c"></div>
<div class="a" style="left:755.8px;top:66.8px;width:10.8px;height:16.3px;background:#3e3e3e;"></div>
<svg style="left:757px;top:72px" width="9" height="6" viewBox="0 0 9 6"><path d="M1.5,1 H7.5 L4.5,4.3Z" fill="#cfcfcf"/></svg>
<div class="t" style="left:666.3px;top:70.56px;font-size:9.5px;color:#111111;font-weight:normal;-webkit-text-stroke:0.15px #111">Visibility States2</div>
<svg style="left:268px;top:50.5px" width="14" height="14" viewBox="0 0 14 14"><rect x="2" y="1" width="5" height="5" fill="none" stroke="#d4d4d4" stroke-width="1.2"/><path d="M4.5,6 V9 Q3.8,10 4.6,11 V12.5" fill="none" stroke="#d4d4d4" stroke-width="1.1"/></svg>
<svg style="left:284.5px;top:50.5px" width="14" height="14" viewBox="0 0 14 14"><path d="M0.5,4 L3,1.5 V6.5Z M12,4 L9.5,1.5 V6.5Z" fill="#d4d4d4"/><path d="M1,10.5 H12 M1,8.5 V12.5 M12,8.5 V12.5" stroke="#d4d4d4" stroke-width="1.1" fill="none"/></svg>
<svg style="left:305px;top:50.5px" width="14" height="14" viewBox="0 0 14 14"><rect x="3" y="0.5" width="3" height="3" fill="#d4d4d4"/><rect x="9" y="5" width="3" height="3" fill="#d4d4d4"/><path d="M1,6.5 L9.5,11.5" stroke="#d4d4d4" stroke-width="1.5"/><circle cx="1.5" cy="6.5" r="1.2" fill="#d4d4d4"/></svg>
<svg style="left:324.5px;top:50.5px" width="14" height="14" viewBox="0 0 14 14"><rect x="5" y="1" width="2.6" height="2.6" fill="#d4d4d4"/><rect x="5" y="5.5" width="2.6" height="2.6" fill="#d4d4d4"/><rect x="9.5" y="1" width="2.6" height="2.6" fill="#d4d4d4"/><rect x="9.5" y="5.5" width="2.6" height="2.6" fill="#d4d4d4"/><path d="M1.5,0.5 V8.5 M0.5,0.5 H2.5 M0.5,8.5 H2.5 M4.5,11 H12 M4.5,10 V12 M12,10 V12" stroke="#d4d4d4" stroke-width="1" fill="none"/></svg>
<svg style="left:264.5px;top:68.5px" width="14" height="14" viewBox="0 0 14 14"><path d="M4,1 L11,8.5 M1.5,12 H11" stroke="#d4d4d4" stroke-width="1.2"/><path d="M2,11 Q2.5,5 7,4" fill="none" stroke="#d4d4d4" stroke-width="1"/><rect x="10" y="10.5" width="3" height="3" fill="#d4d4d4"/></svg>
<svg style="left:284.5px;top:69.5px" width="14" height="14" viewBox="0 0 14 14"><path d="M0.5,1.5 H12" stroke="#d4d4d4" stroke-width="1.2" stroke-dasharray="1.6 0.9"/><path d="M4.5,6 L6.3,4.5 L8,6 V9.5 H4.5Z" fill="#d4d4d4"/></svg>
<svg style="left:305px;top:68.5px" width="14" height="14" viewBox="0 0 14 14"><path d="M9.5,0 V13" stroke="#d4d4d4" stroke-width="1.2" stroke-dasharray="1.6 1"/><path d="M1,5 H4 V3 L7.5,6.5 L4,10 V8 H1Z" fill="#d4d4d4"/></svg>
<svg style="left:324.5px;top:68.5px" width="14" height="14" viewBox="0 0 14 14"><path d="M0.5,0.5 H5 L2.8,2.5Z" fill="#d4d4d4"/><rect x="3" y="3.5" width="8" height="10" fill="#d4d4d4"/><rect x="4.5" y="5.5" width="5" height="1.6" fill="#3d8fe8"/><rect x="4.5" y="8.5" width="5" height="1.6" fill="#3d8fe8"/></svg>
<svg style="left:264.5px;top:86.5px" width="14" height="14" viewBox="0 0 14 14"><rect x="0.5" y="1" width="12" height="2.5" fill="#3d8fe8"/><rect x="0.5" y="4.5" width="3.4" height="2.6" fill="#d4d4d4"/><rect x="0.5" y="8.0" width="3.4" height="2.6" fill="#d4d4d4"/><rect x="4.7" y="4.5" width="3.4" height="2.6" fill="#d4d4d4"/><rect x="4.7" y="8.0" width="3.4" height="2.6" fill="#d4d4d4"/><rect x="8.9" y="4.5" width="3.4" height="2.6" fill="#d4d4d4"/><rect x="8.9" y="8.0" width="3.4" height="2.6" fill="#d4d4d4"/></svg>
<svg style="left:285px;top:86.5px" width="14" height="14" viewBox="0 0 14 14"><path d="M0.5,4.5 H9 M5,0 V9" stroke="#d4d4d4" stroke-width="1.1"/><circle cx="5" cy="4.5" r="2.3" fill="none" stroke="#d4d4d4" stroke-width="1.1"/><rect x="8" y="8" width="3" height="3" fill="none" stroke="#d4d4d4" stroke-width="1"/><rect x="6" y="10.5" width="3" height="3" fill="none" stroke="#d4d4d4" stroke-width="1"/></svg>
<svg style="left:389.5px;top:50px" width="14" height="14" viewBox="0 0 14 14"><path d="M6,0.5 L8.5,3 H3.5Z M6,12.5 L8.5,10 H3.5Z M0,6.5 L3,4 V9Z M12,6.5 L9,4 V9Z" fill="#3d8fe8"/><rect x="3" y="3.5" width="6" height="6" fill="#3d8fe8"/><circle cx="6" cy="6.5" r="1.8" fill="#ddd"/><path transform="translate(7,0) scale(1)" d="M3.2,0 L0,4.3 H2.3 L1,8 L5.5,3 H3.2 L4.6,0Z" fill="#f0a63a"/></svg>
<svg style="left:410px;top:50px" width="14" height="14" viewBox="0 0 14 14"><rect x="0.5" y="0.5" width="12" height="12" fill="none" stroke="#d4d4d4" stroke-width="1" stroke-dasharray="1.5 1"/><rect x="0.8" y="6.5" width="6" height="6" fill="none" stroke="#d4d4d4" stroke-width="1.3"/><path transform="translate(6,1.5) scale(1)" d="M3.2,0 L0,4.3 H2.3 L1,8 L5.5,3 H3.2 L4.6,0Z" fill="#f0a63a"/></svg>
<svg style="left:429.5px;top:50px" width="14" height="14" viewBox="0 0 14 14"><path d="M4.5,0.8 H1 V12.2 H4.5 M8,0.8 L11,12.2 H7" fill="none" stroke="#d4d4d4" stroke-width="1.3"/><path d="M6,0 V13" stroke="#d4d4d4" stroke-width="0.9" stroke-dasharray="1.2 1"/><path transform="translate(7,0) scale(1)" d="M3.2,0 L0,4.3 H2.3 L1,8 L5.5,3 H3.2 L4.6,0Z" fill="#f0a63a"/></svg>
<svg style="left:389.5px;top:68.5px" width="14" height="14" viewBox="0 0 14 14"><path d="M4,0.8 H1 V12.2 H11" fill="none" stroke="#d4d4d4" stroke-width="1.3"/><path d="M5,8.5 H11" stroke="#d4d4d4" stroke-width="0.9" stroke-dasharray="1.2 1"/><path d="M4,0.8 V10" stroke="#d4d4d4" stroke-width="0.9"/><path transform="translate(6,0.5) scale(1)" d="M3.2,0 L0,4.3 H2.3 L1,8 L5.5,3 H3.2 L4.6,0Z" fill="#f0a63a"/></svg>
<svg style="left:410px;top:68.5px" width="14" height="14" viewBox="0 0 14 14"><path d="M9.5,3 A5,5 0 1 0 10,10" fill="none" stroke="#d4d4d4" stroke-width="1.3"/><path d="M8,1.5 L10.5,3 L9,5.5" fill="none" stroke="#d4d4d4" stroke-width="1"/><path transform="translate(7,4.5) scale(1)" d="M3.2,0 L0,4.3 H2.3 L1,8 L5.5,3 H3.2 L4.6,0Z" fill="#f0a63a"/></svg>
<svg style="left:429.5px;top:68.5px" width="14" height="14" viewBox="0 0 14 14"><path d="M1,12 V1 H4 V12Z M8,12 V1 H11 V12Z" fill="none" stroke="#d4d4d4" stroke-width="1.2"/><path d="M6,0 V13" stroke="#d4d4d4" stroke-width="1"/><path transform="translate(7,0) scale(1)" d="M3.2,0 L0,4.3 H2.3 L1,8 L5.5,3 H3.2 L4.6,0Z" fill="#f0a63a"/></svg>
<svg style="left:390px;top:86.5px" width="14" height="14" viewBox="0 0 14 14"><rect x="1" y="1" width="4.6" height="4.6" fill="#d4d4d4"/><rect x="1" y="7" width="4.6" height="4.6" fill="#d4d4d4"/><rect x="7" y="1" width="4.6" height="4.6" fill="#d4d4d4"/><rect x="7" y="7" width="4.6" height="4.6" fill="#d4d4d4"/><path transform="translate(6.5,0.5) scale(1)" d="M3.2,0 L0,4.3 H2.3 L1,8 L5.5,3 H3.2 L4.6,0Z" fill="#f0a63a"/></svg>
<svg style="left:409.5px;top:86.5px" width="14" height="14" viewBox="0 0 14 14"><rect x="0.5" y="2.5" width="10" height="10.5" fill="#d4d4d4"/><rect x="0.5" y="2.5" width="10" height="2" fill="#3d8fe8"/><path d="M3.5,6.5 H9 M3.5,9 H9 M3.5,11.5 H9" stroke="#3d8fe8" stroke-width="1.2"/><path d="M1.5,6.5 H2.3 M1.5,9 H2.3 M1.5,11.5 H2.3" stroke="#3d8fe8" stroke-width="1.2"/><path transform="translate(8,0) scale(1)" d="M3.2,0 L0,4.3 H2.3 L1,8 L5.5,3 H3.2 L4.6,0Z" fill="#f0a63a"/></svg>
<svg style="left:458.1px;top:49.5px" width="14" height="14" viewBox="0 0 14 14"><g transform="translate(0,1) scale(0.92)"><rect x="2" y="1" width="5" height="5" fill="none" stroke="#d4d4d4" stroke-width="1.2"/><path d="M4.5,6 V9 Q3.8,10 4.6,11 V12.5" fill="none" stroke="#d4d4d4" stroke-width="1.1"/></g><path transform="translate(7.5,0) scale(1)" d="M3.2,0 L0,4.3 H2.3 L1,8 L5.5,3 H3.2 L4.6,0Z" fill="#f0a63a"/></svg>
<svg style="left:478.2px;top:49.5px" width="14" height="14" viewBox="0 0 14 14"><g transform="translate(0,1) scale(0.92)"><path d="M0.5,4 L3,1.5 V6.5Z M12,4 L9.5,1.5 V6.5Z" fill="#d4d4d4"/><path d="M1,10.5 H12 M1,8.5 V12.5 M12,8.5 V12.5" stroke="#d4d4d4" stroke-width="1.1" fill="none"/></g><path transform="translate(7.5,0) scale(1)" d="M3.2,0 L0,4.3 H2.3 L1,8 L5.5,3 H3.2 L4.6,0Z" fill="#f0a63a"/></svg>
<svg style="left:498.4px;top:49.5px" width="14" height="14" viewBox="0 0 14 14"><g transform="translate(0,1) scale(0.92)"><path d="M0.5,4 L3,1.5 V6.5Z M12,4 L9.5,1.5 V6.5Z" fill="#d4d4d4"/><path d="M1,10.5 H12 M1,8.5 V12.5 M12,8.5 V12.5" stroke="#d4d4d4" stroke-width="1.1" fill="none"/></g><path transform="translate(7.5,0) scale(1)" d="M3.2,0 L0,4.3 H2.3 L1,8 L5.5,3 H3.2 L4.6,0Z" fill="#f0a63a"/></svg>
<svg style="left:517.9px;top:49.5px" width="14" height="14" viewBox="0 0 14 14"><g transform="translate(0,1) scale(0.92)"><path d="M0.5,4 L3,1.5 V6.5Z M12,4 L9.5,1.5 V6.5Z" fill="#d4d4d4"/><path d="M1,10.5 H12 M1,8.5 V12.5 M12,8.5 V12.5" stroke="#d4d4d4" stroke-width="1.1" fill="none"/></g><path transform="translate(7.5,0) scale(1)" d="M3.2,0 L0,4.3 H2.3 L1,8 L5.5,3 H3.2 L4.6,0Z" fill="#f0a63a"/></svg>
<svg style="left:538px;top:49.5px" width="14" height="14" viewBox="0 0 14 14"><g transform="translate(0,1) scale(0.92)"><path d="M0.5,4 L3,1.5 V6.5Z M12,4 L9.5,1.5 V6.5Z" fill="#d4d4d4"/><path d="M1,10.5 H12 M1,8.5 V12.5 M12,8.5 V12.5" stroke="#d4d4d4" stroke-width="1.1" fill="none"/></g><path transform="translate(7.5,0) scale(1)" d="M3.2,0 L0,4.3 H2.3 L1,8 L5.5,3 H3.2 L4.6,0Z" fill="#f0a63a"/></svg>
<svg style="left:558.1px;top:49.5px" width="14" height="14" viewBox="0 0 14 14"><g transform="translate(0,1) scale(0.92)"><path d="M0.5,4 L3,1.5 V6.5Z M12,4 L9.5,1.5 V6.5Z" fill="#d4d4d4"/><path d="M1,10.5 H12 M1,8.5 V12.5 M12,8.5 V12.5" stroke="#d4d4d4" stroke-width="1.1" fill="none"/></g><path transform="translate(7.5,0) scale(1)" d="M3.2,0 L0,4.3 H2.3 L1,8 L5.5,3 H3.2 L4.6,0Z" fill="#f0a63a"/></svg>
<svg style="left:578.2px;top:49.5px" width="14" height="14" viewBox="0 0 14 14"><g transform="translate(0,1) scale(0.92)"><rect x="3" y="0.5" width="3" height="3" fill="#d4d4d4"/><rect x="9" y="5" width="3" height="3" fill="#d4d4d4"/><path d="M1,6.5 L9.5,11.5" stroke="#d4d4d4" stroke-width="1.5"/><circle cx="1.5" cy="6.5" r="1.2" fill="#d4d4d4"/></g><path transform="translate(7.5,0) scale(1)" d="M3.2,0 L0,4.3 H2.3 L1,8 L5.5,3 H3.2 L4.6,0Z" fill="#f0a63a"/></svg>
<svg style="left:598.4px;top:49.5px" width="14" height="14" viewBox="0 0 14 14"><g transform="translate(0,1) scale(0.92)"><rect x="3" y="0.5" width="3" height="3" fill="#d4d4d4"/><rect x="9" y="5" width="3" height="3" fill="#d4d4d4"/><path d="M1,6.5 L9.5,11.5" stroke="#d4d4d4" stroke-width="1.5"/><circle cx="1.5" cy="6.5" r="1.2" fill="#d4d4d4"/></g><path transform="translate(7.5,0) scale(1)" d="M3.2,0 L0,4.3 H2.3 L1,8 L5.5,3 H3.2 L4.6,0Z" fill="#f0a63a"/></svg>
<svg style="left:458.1px;top:67.8px" width="14" height="14" viewBox="0 0 14 14"><g transform="translate(0,1) scale(0.92)"><rect x="3" y="0.5" width="3" height="3" fill="#d4d4d4"/><rect x="9" y="5" width="3" height="3" fill="#d4d4d4"/><path d="M1,6.5 L9.5,11.5" stroke="#d4d4d4" stroke-width="1.5"/><circle cx="1.5" cy="6.5" r="1.2" fill="#d4d4d4"/></g><path transform="translate(7.5,0) scale(1)" d="M3.2,0 L0,4.3 H2.3 L1,8 L5.5,3 H3.2 L4.6,0Z" fill="#f0a63a"/></svg>
<svg style="left:478.2px;top:67.8px" width="14" height="14" viewBox="0 0 14 14"><g transform="translate(0,1) scale(0.92)"><rect x="3" y="0.5" width="3" height="3" fill="#d4d4d4"/><rect x="9" y="5" width="3" height="3" fill="#d4d4d4"/><path d="M1,6.5 L9.5,11.5" stroke="#d4d4d4" stroke-width="1.5"/><circle cx="1.5" cy="6.5" r="1.2" fill="#d4d4d4"/></g><path transform="translate(7.5,0) scale(1)" d="M3.2,0 L0,4.3 H2.3 L1,8 L5.5,3 H3.2 L4.6,0Z" fill="#f0a63a"/></svg>
<svg style="left:498.4px;top:67.8px" width="14" height="14" viewBox="0 0 14 14"><g transform="translate(0,1) scale(0.92)"><rect x="3" y="0.5" width="3" height="3" fill="#d4d4d4"/><rect x="9" y="5" width="3" height="3" fill="#d4d4d4"/><path d="M1,6.5 L9.5,11.5" stroke="#d4d4d4" stroke-width="1.5"/><circle cx="1.5" cy="6.5" r="1.2" fill="#d4d4d4"/></g><path transform="translate(7.5,0) scale(1)" d="M3.2,0 L0,4.3 H2.3 L1,8 L5.5,3 H3.2 L4.6,0Z" fill="#f0a63a"/></svg>
<svg style="left:517.9px;top:67.8px" width="14" height="14" viewBox="0 0 14 14"><g transform="translate(0,1) scale(0.92)"><rect x="5" y="1" width="2.6" height="2.6" fill="#d4d4d4"/><rect x="5" y="5.5" width="2.6" height="2.6" fill="#d4d4d4"/><rect x="9.5" y="1" width="2.6" height="2.6" fill="#d4d4d4"/><rect x="9.5" y="5.5" width="2.6" height="2.6" fill="#d4d4d4"/><path d="M1.5,0.5 V8.5 M0.5,0.5 H2.5 M0.5,8.5 H2.5 M4.5,11 H12 M4.5,10 V12 M12,10 V12" stroke="#d4d4d4" stroke-width="1" fill="none"/></g><path transform="translate(7.5,0) scale(1)" d="M3.2,0 L0,4.3 H2.3 L1,8 L5.5,3 H3.2 L4.6,0Z" fill="#f0a63a"/></svg>
<svg style="left:538px;top:67.8px" width="14" height="14" viewBox="0 0 14 14"><g transform="translate(0,1) scale(0.92)"><rect x="5" y="1" width="2.6" height="2.6" fill="#d4d4d4"/><rect x="5" y="5.5" width="2.6" height="2.6" fill="#d4d4d4"/><rect x="9.5" y="1" width="2.6" height="2.6" fill="#d4d4d4"/><rect x="9.5" y="5.5" width="2.6" height="2.6" fill="#d4d4d4"/><path d="M1.5,0.5 V8.5 M0.5,0.5 H2.5 M0.5,8.5 H2.5 M4.5,11 H12 M4.5,10 V12 M12,10 V12" stroke="#d4d4d4" stroke-width="1" fill="none"/></g><path transform="translate(7.5,0) scale(1)" d="M3.2,0 L0,4.3 H2.3 L1,8 L5.5,3 H3.2 L4.6,0Z" fill="#f0a63a"/></svg>
<svg style="left:558.1px;top:67.8px" width="14" height="14" viewBox="0 0 14 14"><g transform="translate(0,1) scale(0.92)"><rect x="5" y="1" width="2.6" height="2.6" fill="#d4d4d4"/><rect x="5" y="5.5" width="2.6" height="2.6" fill="#d4d4d4"/><rect x="9.5" y="1" width="2.6" height="2.6" fill="#d4d4d4"/><rect x="9.5" y="5.5" width="2.6" height="2.6" fill="#d4d4d4"/><path d="M1.5,0.5 V8.5 M0.5,0.5 H2.5 M0.5,8.5 H2.5 M4.5,11 H12 M4.5,10 V12 M12,10 V12" stroke="#d4d4d4" stroke-width="1" fill="none"/></g><path transform="translate(7.5,0) scale(1)" d="M3.2,0 L0,4.3 H2.3 L1,8 L5.5,3 H3.2 L4.6,0Z" fill="#f0a63a"/></svg>
<svg style="left:578.2px;top:67.8px" width="14" height="14" viewBox="0 0 14 14"><g transform="translate(0,1) scale(0.92)"><rect x="5" y="1" width="2.6" height="2.6" fill="#d4d4d4"/><rect x="5" y="5.5" width="2.6" height="2.6" fill="#d4d4d4"/><rect x="9.5" y="1" width="2.6" height="2.6" fill="#d4d4d4"/><rect x="9.5" y="5.5" width="2.6" height="2.6" fill="#d4d4d4"/><path d="M1.5,0.5 V8.5 M0.5,0.5 H2.5 M0.5,8.5 H2.5 M4.5,11 H12 M4.5,10 V12 M12,10 V12" stroke="#d4d4d4" stroke-width="1" fill="none"/></g><path transform="translate(7.5,0) scale(1)" d="M3.2,0 L0,4.3 H2.3 L1,8 L5.5,3 H3.2 L4.6,0Z" fill="#f0a63a"/></svg>
<svg style="left:598.4px;top:67.8px" width="14" height="14" viewBox="0 0 14 14"><g transform="translate(0,1) scale(0.92)"><rect x="5" y="1" width="2.6" height="2.6" fill="#d4d4d4"/><rect x="5" y="5.5" width="2.6" height="2.6" fill="#d4d4d4"/><rect x="9.5" y="1" width="2.6" height="2.6" fill="#d4d4d4"/><rect x="9.5" y="5.5" width="2.6" height="2.6" fill="#d4d4d4"/><path d="M1.5,0.5 V8.5 M0.5,0.5 H2.5 M0.5,8.5 H2.5 M4.5,11 H12 M4.5,10 V12 M12,10 V12" stroke="#d4d4d4" stroke-width="1" fill="none"/></g><path transform="translate(7.5,0) scale(1)" d="M3.2,0 L0,4.3 H2.3 L1,8 L5.5,3 H3.2 L4.6,0Z" fill="#f0a63a"/></svg>
<svg style="left:458.1px;top:86px" width="14" height="14" viewBox="0 0 14 14"><g transform="translate(0,1) scale(0.92)"><path d="M4,1 L11,8.5 M1.5,12 H11" stroke="#d4d4d4" stroke-width="1.2"/><path d="M2,11 Q2.5,5 7,4" fill="none" stroke="#d4d4d4" stroke-width="1"/><rect x="10" y="10.5" width="3" height="3" fill="#d4d4d4"/></g><path transform="translate(7.5,0) scale(1)" d="M3.2,0 L0,4.3 H2.3 L1,8 L5.5,3 H3.2 L4.6,0Z" fill="#f0a63a"/></svg>
<svg style="left:478.2px;top:86px" width="14" height="14" viewBox="0 0 14 14"><g transform="translate(0,1) scale(0.92)"><path d="M9.5,0 V13" stroke="#d4d4d4" stroke-width="1.2" stroke-dasharray="1.6 1"/><path d="M1,5 H4 V3 L7.5,6.5 L4,10 V8 H1Z" fill="#d4d4d4"/></g><path transform="translate(7.5,0) scale(1)" d="M3.2,0 L0,4.3 H2.3 L1,8 L5.5,3 H3.2 L4.6,0Z" fill="#f0a63a"/></svg>
<svg style="left:498.4px;top:86px" width="14" height="14" viewBox="0 0 14 14"><g transform="translate(0,1) scale(0.92)"><path d="M0.5,0.5 H5 L2.8,2.5Z" fill="#d4d4d4"/><rect x="3" y="3.5" width="8" height="10" fill="#d4d4d4"/><rect x="4.5" y="5.5" width="5" height="1.6" fill="#3d8fe8"/><rect x="4.5" y="8.5" width="5" height="1.6" fill="#3d8fe8"/></g><path transform="translate(7.5,0) scale(1)" d="M3.2,0 L0,4.3 H2.3 L1,8 L5.5,3 H3.2 L4.6,0Z" fill="#f0a63a"/></svg>
<svg style="left:517.9px;top:86px" width="14" height="14" viewBox="0 0 14 14"><g transform="translate(0,1) scale(0.92)"><path d="M0.5,0.5 H5 L2.8,2.5Z" fill="#d4d4d4"/><rect x="3" y="3.5" width="8" height="10" fill="#d4d4d4"/><rect x="4.5" y="5.5" width="5" height="1.6" fill="#3d8fe8"/><rect x="4.5" y="8.5" width="5" height="1.6" fill="#3d8fe8"/></g><path transform="translate(7.5,0) scale(1)" d="M3.2,0 L0,4.3 H2.3 L1,8 L5.5,3 H3.2 L4.6,0Z" fill="#f0a63a"/></svg>
<div class="a" style="left:0px;top:122px;width:176px;height:23px;background:#383838;"></div>
<svg style="left:10px;top:128px" width="4" height="12" viewBox="0 0 4 12"><rect x="0" y="0.0" width="3.5" height="1.2" fill="#bdbdbd"/><rect x="0" y="2.3" width="3.5" height="1.2" fill="#bdbdbd"/><rect x="0" y="4.6" width="3.5" height="1.2" fill="#bdbdbd"/><rect x="0" y="6.8999999999999995" width="3.5" height="1.2" fill="#bdbdbd"/><rect x="0" y="9.2" width="3.5" height="1.2" fill="#bdbdbd"/></svg>
<div class="t" style="left:18.2px;top:130.27px;font-size:8.9px;color:#d8d8d8;font-weight:normal;">Block Authoring Palettes</div>
<div class="a" style="left:154px;top:143px;width:2px;height:734px;background:#363636;"></div>
<div class="a" style="left:156px;top:443.5px;width:16px;height:433.5px;background:#414141;"></div>
<div class="a" style="left:156px;top:244px;width:16px;height:99.8px;background:#303030;border-top:1px solid #2a2a2a"></div>
<div class="a" style="left:156px;top:343.8px;width:16px;height:99.7px;background:#303030;border-top:1px solid #282828"></div>
<div class="a" style="left:156px;top:143px;width:16px;height:101px;background:#3e3e3e;"></div>
<div class="a" style="left:172px;top:122px;width:5px;height:756px;background:#353535;"></div>
<div class="t" style="left:104.4px;top:189.2px;width:120px;text-align:center;font-size:9.4px;line-height:9.4px;color:#f2f2f2;font-weight:bold;transform:rotate(-90deg)">Parameters</div>
<div class="t" style="left:104.4px;top:289.3px;width:120px;text-align:center;font-size:9.2px;line-height:9.2px;color:#c8c8c8;font-weight:normal;transform:rotate(-90deg)">Actions</div>
<div class="t" style="left:104.4px;top:389.2px;width:120px;text-align:center;font-size:9.2px;line-height:9.2px;color:#c8c8c8;font-weight:normal;transform:rotate(-90deg)">Parameter Sets</div>
<div class="t" style="left:59.1px;top:166.53px;font-size:10px;color:#e2e2e2;font-weight:normal;transform:scaleX(0.86);transform-origin:0 0">Point</div>
<div class="t" style="left:59.1px;top:200.84px;font-size:10px;color:#e2e2e2;font-weight:normal;transform:scaleX(0.86);transform-origin:0 0">Linear</div>
<div class="t" style="left:59.1px;top:235.03px;font-size:10px;color:#e2e2e2;font-weight:normal;transform:scaleX(0.86);transform-origin:0 0">Polar</div>
<div class="t" style="left:59.1px;top:269.04px;font-size:10px;color:#e2e2e2;font-weight:normal;transform:scaleX(0.86);transform-origin:0 0">XY</div>
<div class="t" style="left:59.1px;top:303.14px;font-size:10px;color:#e2e2e2;font-weight:normal;transform:scaleX(0.86);transform-origin:0 0">Rotation</div>
<div class="t" style="left:59.1px;top:337.34px;font-size:10px;color:#e2e2e2;font-weight:normal;transform:scaleX(0.86);transform-origin:0 0">Alignment</div>
<div class="t" style="left:59.1px;top:371.54px;font-size:10px;color:#e2e2e2;font-weight:normal;transform:scaleX(0.86);transform-origin:0 0">Flip</div>
<div class="t" style="left:59.1px;top:405.74px;font-size:10px;color:#e2e2e2;font-weight:normal;transform:scaleX(0.86);transform-origin:0 0">Visibility</div>
<div class="t" style="left:59.1px;top:439.94px;font-size:10px;color:#e2e2e2;font-weight:normal;transform:scaleX(0.86);transform-origin:0 0">Lookup</div>
<div class="t" style="left:59.1px;top:474.14px;font-size:10px;color:#e2e2e2;font-weight:normal;transform:scaleX(0.86);transform-origin:0 0">Basepoint</div>
<svg style="left:30px;top:158px" width="26" height="28" viewBox="0 0 26 28"><rect x="7.6" y="3.5" width="9.5" height="9" fill="none" stroke="#dcdcdc" stroke-width="1.4"/><path d="M12.5,12.5 V18 Q11.5,19.5 12.5,21 Q13.5,22.5 13,24.5" fill="none" stroke="#dcdcdc" stroke-width="1.3"/></svg>
<svg style="left:28px;top:196px" width="28" height="24" viewBox="0 0 28 24"><path d="M2,6 L6,2 V10Z M25,6 L21,2 V10Z" fill="#dcdcdc"/><path d="M3.5,19 H23.5 M3.5,16.5 V21.5 M23.5,16.5 V21.5 M5,17.5 L3.5,19 L5,20.5 M22,17.5 L23.5,19 L22,20.5" fill="none" stroke="#dcdcdc" stroke-width="1.1"/></svg>
<svg style="left:28px;top:228px" width="28" height="24" viewBox="0 0 28 24"><rect x="7.5" y="1.5" width="5.5" height="5.5" fill="none" stroke="#dcdcdc" stroke-width="1.4"/><rect x="19.5" y="10" width="5.5" height="5.5" fill="none" stroke="#dcdcdc" stroke-width="1.4"/><path d="M4.5,12 L20.5,21" stroke="#dcdcdc" stroke-width="1.5"/><circle cx="4.5" cy="12" r="1.6" fill="#dcdcdc"/><path d="M18,19.5 H23 L20.5,23.5Z" fill="#dcdcdc"/></svg>
<svg style="left:28px;top:262px" width="28" height="26" viewBox="0 0 28 26"><rect x="9" y="3" width="3" height="3" fill="#dcdcdc"/><rect x="9" y="13" width="3" height="3" fill="#dcdcdc"/><rect x="20" y="3" width="3" height="3" fill="#dcdcdc"/><rect x="20" y="13" width="3" height="3" fill="#dcdcdc"/><path d="M3,2.5 H7 M3,14.5 H7 M5,2.5 V14.5 M11,21.5 H26 M11,19.5 V23.5 M26,19.5 V23.5" fill="none" stroke="#dcdcdc" stroke-width="1.1"/><path d="M3.5,4 L5,2.5 L6.5,4 M3.5,13 L5,14.5 L6.5,13" fill="none" stroke="#dcdcdc" stroke-width="1"/></svg>
<svg style="left:28px;top:297px" width="28" height="26" viewBox="0 0 28 26"><path d="M8,2.5 L23,17" stroke="#dcdcdc" stroke-width="1.4"/><path d="M4,21.5 H23" stroke="#dcdcdc" stroke-width="1.3"/><rect x="21.5" y="20" width="4" height="4" fill="none" stroke="#dcdcdc" stroke-width="1.1"/><path d="M5,19 Q6,10 15,8.5" fill="none" stroke="#dcdcdc" stroke-width="1.2"/><path d="M12.5,6 L15.5,8.5 L12.5,11" fill="none" stroke="#dcdcdc" stroke-width="1.1"/><path d="M3,18 L5,21 L7,18" fill="none" stroke="#dcdcdc" stroke-width="1.1"/></svg>
<svg style="left:28px;top:335px" width="28" height="20" viewBox="0 0 28 20"><path d="M2,2.5 H26" stroke="#dcdcdc" stroke-width="1.3" stroke-dasharray="2.4 1.6"/><path d="M10.5,11 L13.5,8 L16.5,11 V16.5 H10.5Z" fill="#dcdcdc"/></svg>
<svg style="left:28px;top:364px" width="28" height="26" viewBox="0 0 28 26"><path d="M20.5,1 V25" stroke="#dcdcdc" stroke-width="1.3" stroke-dasharray="2.4 1.8"/><path d="M5,10.5 H10.5 V7.5 L15.5,12.5 L10.5,17.5 V14.5 H5Z" fill="#dcdcdc"/></svg>
<svg style="left:28px;top:399px" width="28" height="26" viewBox="0 0 28 26"><path d="M5,3.5 H12 L8.5,6.5Z" fill="#dcdcdc"/><rect x="10.5" y="6.5" width="12" height="15" fill="#dcdcdc"/><rect x="12.5" y="10" width="8.5" height="1.8" fill="#3d8fe8"/><rect x="12.5" y="13.8" width="8.5" height="1.8" fill="#3d8fe8"/><rect x="12.5" y="17.5" width="8.5" height="1.8" fill="#3d8fe8"/></svg>
<svg style="left:28px;top:436px" width="28" height="22" viewBox="0 0 28 22"><rect x="2" y="4" width="24" height="4" fill="#3d8fe8"/><rect x="2.0" y="9.5" width="7" height="4.2" fill="#dcdcdc"/><rect x="2.0" y="14.8" width="7" height="4.2" fill="#dcdcdc"/><rect x="10.3" y="9.5" width="7" height="4.2" fill="#dcdcdc"/><rect x="10.3" y="14.8" width="7" height="4.2" fill="#dcdcdc"/><rect x="18.6" y="9.5" width="7" height="4.2" fill="#dcdcdc"/><rect x="18.6" y="14.8" width="7" height="4.2" fill="#dcdcdc"/></svg>
<svg style="left:28px;top:467px" width="28" height="26" viewBox="0 0 28 26"><path d="M3.5,9.5 H19 M11,2 V18" stroke="#dcdcdc" stroke-width="1.4"/><rect x="7.5" y="6" width="7" height="7" fill="none" stroke="#dcdcdc" stroke-width="1.2"/><rect x="16" y="15" width="5" height="5" fill="none" stroke="#dcdcdc" stroke-width="1.2"/><rect x="20" y="19" width="5" height="5" fill="none" stroke="#dcdcdc" stroke-width="1.2"/><path d="M18,21 L22.5,17" stroke="#e89a3a" stroke-width="1.3"/></svg>
<svg style="left:176px;top:123px" width="1424" height="18" viewBox="0 0 1424 18"><rect x="0" y="1" width="1424" height="16" fill="#3f3f3f"/><path d="M13,16.5 L20,2.5 Q21,1.5 23,1.5 H93 Q95,1.5 96,2.5 L101.5,16.5Z" fill="#333333"/><path d="M8,6 L4.5,9.5 L8,13Z" fill="none" stroke="#666" stroke-width="1"/><path d="M1410.5,6 L1414,10 L1410.5,14Z" fill="none" stroke="#5a5a5a" stroke-width="1"/><path d="M90.5,8.5 L96.5,14.5 M96.5,8.5 L90.5,14.5" stroke="#cfcfcf" stroke-width="1.1"/></svg>
<div class="t" style="left:199px;top:128.50px;font-size:9.1px;color:#f4f4f4;font-weight:normal;">BTABLE.dwg</div>
<div class="a" style="left:194px;top:826px;width:1404px;height:48px;background:#474747;border:1px solid #8a8a8a;border-bottom:2px solid #f0f0f0"></div>
<div class="a" style="left:0;top:877px;width:1600px;height:18px;background:#434343"></div>
<div class="a" style="left:0;top:895px;width:1600px;height:2px;background:#333333"></div>
<div class="a" style="left:0;top:897px;width:1600px;height:1px;background:#f4f4f4"></div>
<div class="a" style="left:0;top:898px;width:1600px;height:2px;background:#262626"></div>
<div class="a" style="left:171px;top:819px;width:23px;height:58px;background:#383838;"></div>
<svg style="left:178px;top:826px" width="14" height="40" viewBox="0 0 14 40"><path d="M1.5,1.8 H12.5 M1.5,4.2 H12.5" stroke="#c8c8c8" stroke-width="1" stroke-dasharray="1.8 0.6"/><path d="M2,10.5 L11.5,20 M11.5,10.5 L2,20" stroke="#d8d8d8" stroke-width="1.1"/><path d="M2.5,35.5 L9,28.5 Q10.5,27.5 11.2,29 L5,36.5 H2.5Z" fill="none" stroke="#d8d8d8" stroke-width="1"/><path d="M7,36 H12 M8.5,34 H12" stroke="#d8d8d8" stroke-width="0.9"/></svg>
<div class="a" style="left:195px;top:856px;width:1403px;height:1px;background:#5c5c5c;"></div>
<div class="t" style="left:197.8px;top:827.69px;font-size:11px;color:#e6e6e6;font-weight:normal;font-family:'Liberation Mono',monospace;transform:scaleX(0.882);transform-origin:0 0">Command:  *Cancel*</div>
<div class="t" style="left:197.8px;top:842.69px;font-size:11px;color:#e6e6e6;font-weight:normal;font-family:'Liberation Mono',monospace;transform:scaleX(0.882);transform-origin:0 0">Command:  *Cancel*</div>
<div class="t" style="left:197.8px;top:859.29px;font-size:11px;color:#e6e6e6;font-weight:normal;font-family:'Liberation Mono',monospace;transform:scaleX(0.882);transform-origin:0 0">Command:</div>
<div class="a" style="left:1584px;top:827px;width:13.5px;height:29px;background:#f4f4f4;"></div>
<svg style="left:1584px;top:828px" width="14" height="28" viewBox="0 0 14 28"><path d="M3.5,9 L7,5.5 L10.5,9 M3.5,19 L7,22.5 L10.5,19" fill="none" stroke="#333" stroke-width="1.3"/></svg>
<div class="a" style="left:1518px;top:857px;width:66px;height:15.5px;background:#f2f2f2;"></div>
<div class="a" style="left:1533px;top:858.5px;width:13.5px;height:13px;background:#cfcfcf;"></div>
<svg style="left:1518px;top:857px" width="66" height="16" viewBox="0 0 66 16"><path d="M7.5,4.5 L4,8 L7.5,11.5 M58,4.5 L61.5,8 L58,11.5" fill="none" stroke="#333" stroke-width="1.3"/></svg>
<div class="a" style="left:1584px;top:857px;width:14px;height:15.5px;background:#474747;"></div>
<div class="t" style="left:2.5px;top:882.50px;font-size:9.1px;color:#dedede;font-weight:normal;">2364.405, 617.026, 0</div>
<div class="a" style="left:216.25px;top:878.4px;width:36.25px;height:16.2px;background:#333333;"></div>
<div class="a" style="left:290px;top:878.4px;width:72.5px;height:16.2px;background:#333333;"></div>
<div class="a" style="left:521.9px;top:878.4px;width:18.100000000000023px;height:16.2px;background:#333333;"></div>
<div class="a" style="left:558px;top:878.4px;width:18px;height:16.2px;background:#333333;"></div>
<svg style="left:216.6px;top:878.5px" width="18" height="16" viewBox="0 0 18 16"><path d="M3.0,3 V14" stroke="#d8d8d8" stroke-width="1.2"/><path d="M6.6,3 V14" stroke="#d8d8d8" stroke-width="1.2"/><path d="M10.2,3 V14" stroke="#d8d8d8" stroke-width="1.2"/><path d="M13.8,3 V14" stroke="#d8d8d8" stroke-width="1.2"/><path d="M2,4.0 H15" stroke="#d8d8d8" stroke-width="1.2"/><path d="M2,7.3 H15" stroke="#d8d8d8" stroke-width="1.2"/><path d="M2,10.6 H15" stroke="#d8d8d8" stroke-width="1.2"/><path d="M2,13.899999999999999 H15" stroke="#d8d8d8" stroke-width="1.2"/><rect x="12.5" y="11.5" width="3" height="3" fill="#3d8fe8"/></svg>
<svg style="left:234.5px;top:878.5px" width="18" height="16" viewBox="0 0 18 16"><path d="M3.5,2 V15" stroke="#d8d8d8" stroke-width="1.2"/><path d="M7.2,2 V15" stroke="#d8d8d8" stroke-width="1.2"/><path d="M10.9,2 V15" stroke="#d8d8d8" stroke-width="1.2"/><path d="M14.600000000000001,2 V15" stroke="#d8d8d8" stroke-width="1.2"/><path d="M1.5,4.0 H16" stroke="#d8d8d8" stroke-width="1.2"/><path d="M1.5,7.3 H16" stroke="#d8d8d8" stroke-width="1.2"/><path d="M1.5,10.6 H16" stroke="#d8d8d8" stroke-width="1.2"/><path d="M1.5,13.899999999999999 H16" stroke="#d8d8d8" stroke-width="1.2"/></svg>
<svg style="left:252.89999999999998px;top:878.5px" width="18" height="16" viewBox="0 0 18 16"><path d="M4.5,2 V14 H15 M4.5,9 H9 V14" fill="none" stroke="#d8d8d8" stroke-width="1.4"/></svg>
<svg style="left:271.6px;top:878.5px" width="18" height="16" viewBox="0 0 18 16"><circle cx="8" cy="9" r="5" fill="none" stroke="#d8d8d8" stroke-width="1.3"/><path d="M6,11 L14,3 M8,9 H17" stroke="#d8d8d8" stroke-width="1.2"/></svg>
<svg style="left:290.4px;top:878.5px" width="18" height="16" viewBox="0 0 18 16"><rect x="3.5" y="3.5" width="10" height="10" fill="none" stroke="#d8d8d8" stroke-width="1.4"/><rect x="12" y="1.5" width="3" height="3" fill="#3d8fe8"/></svg>
<svg style="left:308.5px;top:878.5px" width="18" height="16" viewBox="0 0 18 16"><path d="M2.5,14 H15 M3.5,13 L14,3 M5,6 L11,12" fill="none" stroke="#d8d8d8" stroke-width="1.3"/></svg>
<svg style="left:326.6px;top:878.5px" width="18" height="16" viewBox="0 0 18 16"><path d="M9,2.5 V15 M3,9 H15" stroke="#d8d8d8" stroke-width="1.5"/><rect x="2.5" y="5" width="6" height="4.5" fill="#d8d8d8"/></svg>
<svg style="left:344.75px;top:878.5px" width="18" height="16" viewBox="0 0 18 16"><path d="M5.5,1.5 V9 M2,5 H9.5" stroke="#d8d8d8" stroke-width="1.4"/><rect x="8.5" y="8.5" width="8" height="6.5" fill="#aaaaaa"/><path d="M9,11 H16 M9,13 H16" stroke="#555" stroke-width="0.7"/></svg>
<svg style="left:363.5px;top:878.5px" width="18" height="16" viewBox="0 0 18 16"><path d="M2,4 H16 M2,14 H16" stroke="#d8d8d8" stroke-width="1.6"/><path d="M2,9 H16" stroke="#3d8fe8" stroke-width="1.6" stroke-dasharray="2.4 1"/></svg>
<svg style="left:382.25px;top:878.5px" width="18" height="16" viewBox="0 0 18 16"><path d="M2,3 H16" stroke="#3d8fe8" stroke-width="1.4" stroke-dasharray="2 1"/><path d="M7,6 L13,11 L10.5,11.5 L12.5,15 L11,15.5 L9,12 L7,14Z" fill="#d8d8d8"/></svg>
<svg style="left:399.75px;top:878.5px" width="18" height="16" viewBox="0 0 18 16"><path d="M9,2 L16,6 L9,10 L2,6Z" fill="#d8d8d8"/><path d="M2,9 L9,13 L13,11 M2,12 L9,16 L12,14.5" fill="none" stroke="#d8d8d8" stroke-width="1.3"/><path d="M15,10 L13,13 H15 L13.5,15.5" stroke="#3d8fe8" stroke-width="1.1" fill="none"/></svg>
<svg style="left:417.9px;top:878.5px" width="18" height="16" viewBox="0 0 18 16"><circle cx="8" cy="7.5" r="5.5" fill="#3d8fe8" fill-opacity="0.5" stroke="#d8d8d8" stroke-width="1.3"/><path d="M12,11.5 L16,15.5" stroke="#d8d8d8" stroke-width="1.6"/><path d="M5,6 H10 V8 H6 V10 H11" stroke="#80c0ff" stroke-width="0.9" fill="none"/></svg>
<svg style="left:436.6px;top:878.5px" width="18" height="16" viewBox="0 0 18 16"><path d="M9,2 L12,8 L16,14.5 L9,12 L2,14.5 L6,8Z" fill="#d8d8d8"/></svg>
<div class="t" style="left:453.75px;top:881.87px;font-size:10.2px;color:#dcdcdc;font-weight:normal;transform:scaleX(0.88);transform-origin:0 0">1:500</div>
<svg style="left:477px;top:884px" width="7" height="5" viewBox="0 0 7 5"><path d="M1,1 L3.5,3.5 L6,1" fill="none" stroke="#d8d8d8" stroke-width="1"/></svg>
<svg style="left:484.75px;top:878.5px" width="18" height="16" viewBox="0 0 18 16"><path d="M7,3 L10,8.5 L13.5,14.5 L7,12 L1,14.5 L4.5,8.5Z" fill="#d8d8d8"/><circle cx="13.5" cy="4" r="2.3" fill="#f0a63a"/><rect x="13" y="6" width="1.2" height="3" fill="#f0a63a"/></svg>
<svg style="left:503.5px;top:878.5px" width="18" height="16" viewBox="0 0 18 16"><path d="M7,3 L10,8.5 L13.5,14.5 L7,12 L1,14.5 L4.5,8.5Z" fill="#8a8a8a"/><path d="M13.5,2 V7 M11,4.5 H16" stroke="#8a8a8a" stroke-width="1.1"/></svg>
<svg style="left:521.6px;top:878.5px" width="18" height="16" viewBox="0 0 18 16"><rect x="2.5" y="1.5" width="13" height="13" fill="#f0f0f0"/><rect x="3" y="2" width="2" height="2" fill="#222"/><rect x="3" y="6" width="2" height="2" fill="#222"/><rect x="3" y="10" width="2" height="2" fill="#222"/><rect x="5" y="4" width="2" height="2" fill="#222"/><rect x="5" y="8" width="2" height="2" fill="#222"/><rect x="5" y="12" width="2" height="2" fill="#222"/><rect x="7" y="2" width="2" height="2" fill="#222"/><rect x="7" y="6" width="2" height="2" fill="#222"/><rect x="7" y="10" width="2" height="2" fill="#222"/><rect x="9" y="4" width="2" height="2" fill="#222"/><rect x="9" y="8" width="2" height="2" fill="#222"/><rect x="9" y="12" width="2" height="2" fill="#222"/><rect x="11" y="2" width="2" height="2" fill="#222"/><rect x="11" y="6" width="2" height="2" fill="#222"/><rect x="11" y="10" width="2" height="2" fill="#222"/><rect x="13" y="4" width="2" height="2" fill="#222"/><rect x="13" y="8" width="2" height="2" fill="#222"/><rect x="13" y="12" width="2" height="2" fill="#222"/></svg>
<svg style="left:539.75px;top:878.5px" width="18" height="16" viewBox="0 0 18 16"><rect x="2.5" y="1.5" width="13" height="13" fill="#d8d8d8"/><path d="M5,4.5 H8 M10,4.5 H13.5 M5,8 H8 M10,8 H13.5 M5,11.5 H8 M10,11.5 H13.5" stroke="#3a3a3a" stroke-width="1.6"/></svg>
<svg style="left:558.5px;top:878.5px" width="18" height="16" viewBox="0 0 18 16"><path d="M13.5,4.5 A6,6 0 1 0 14.5,11" fill="none" stroke="#d8d8d8" stroke-width="1.4"/><path d="M8.5,5.5 V12 M5.3,8.7 H11.7" stroke="#d8d8d8" stroke-width="1.5"/><path d="M12,2 L14.5,5 L11,5.5" fill="none" stroke="#d8d8d8" stroke-width="1.1"/></svg>
<svg style="left:1464px;top:879px" width="15" height="15" viewBox="0 0 15 15"><circle cx="7.5" cy="7.5" r="4.5" fill="none" stroke="#cfcfcf" stroke-width="3"/><circle cx="7.5" cy="7.5" r="6" fill="none" stroke="#cfcfcf" stroke-width="1.6" stroke-dasharray="1.8 1.3"/></svg>
<svg style="left:1483px;top:879px" width="14" height="15" viewBox="0 0 14 15"><rect x="1.5" y="7" width="8.5" height="6.5" fill="#3d8fe8"/><path d="M7.5,7 V4.5 A2.5,2.5 0 0 1 12.5,4.5 V6" fill="none" stroke="#3d8fe8" stroke-width="1.4"/></svg>
<svg style="left:1501px;top:879px" width="14" height="15" viewBox="0 0 14 15"><circle cx="7" cy="6" r="4.5" fill="#f0a63a"/><rect x="5" y="10" width="4" height="2.5" fill="#f0a63a"/><rect x="5.5" y="13" width="3" height="1.2" fill="#f0a63a"/></svg>
<svg style="left:1519px;top:879px" width="16" height="15" viewBox="0 0 16 15"><rect x="1" y="1.5" width="7" height="7" fill="#3d8fe8"/><circle cx="10" cy="10" r="3.3" fill="none" stroke="#d8d8d8" stroke-width="1.3"/><path d="M12.3,12.3 L14.5,14.5" stroke="#d8d8d8" stroke-width="1.4"/></svg>
<svg style="left:1538px;top:879px" width="15" height="15" viewBox="0 0 15 15"><rect x="1.5" y="1.5" width="11" height="11" fill="none" stroke="#d8d8d8" stroke-width="1.1"/><path d="M4,10 L10,4 M7.5,4 H10 V6.5 M4,7.5 V10 H6.5" fill="none" stroke="#d8d8d8" stroke-width="1"/></svg>
<div class="t" style="left:1557px;top:881.82px;font-size:9.9px;color:#dadada;font-weight:normal;transform:scaleX(0.9);transform-origin:0 0">GstarCAD</div>
</body></html>
